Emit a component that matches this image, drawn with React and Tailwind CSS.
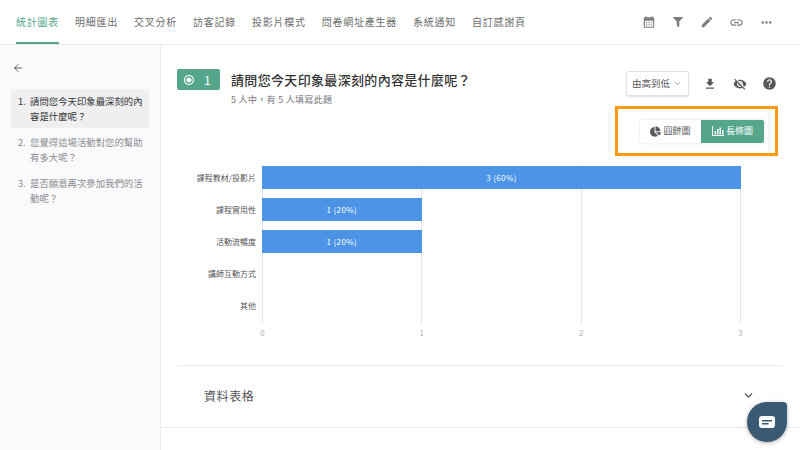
import { ArrowLeft, ChevronDown } from "lucide-react";
import { FaChartPie, FaFilter } from "react-icons/fa";
import {
  MdCalendarMonth,
  MdEdit,
  MdFileDownload,
  MdHelp,
  MdLink,
  MdMoreHoriz,
  MdRadioButtonChecked,
  MdVisibilityOff,
} from "react-icons/md";

const tabs = ["統計圖表", "明細匯出", "交叉分析", "訪客記錄", "投影片模式", "問卷網址產生器", "系統通知", "自訂感謝頁"];

const questions = [
  { no: "1.", text: "請問您今天印象最深刻的內容是什麼呢？", active: true },
  { no: "2.", text: "您覺得這場活動對您的幫助有多大呢？" },
  { no: "3.", text: "是否願意再次參加我們的活動呢？" },
];

const rows = [
  { label: "課程教材/投影片", value: "3 (60%)", width: "w-full" },
  { label: "課程實用性", value: "1 (20%)", width: "w-1/3" },
  { label: "活動流暢度", value: "1 (20%)", width: "w-1/3" },
  { label: "講師互動方式" },
  { label: "其他" },
];

function BarIcon() {
  return (
    <svg width="12" height="10" viewBox="0 0 12 10" fill="currentColor">
      <path d="M0 0h1v9h11v1H0z" />
      <path d="M2.500 5h1.500v3.500H2.500zM5 3h1.500v5.500H5zM7.500 1.500H9v7H7.500zM10 4h1.500v4.500H10z" />
    </svg>
  );
}

function ChatIcon() {
  return (
    <svg width="16" height="12" viewBox="0 0 16 12">
      <rect width="16" height="12" rx="3" fill="#fff" />
      <path d="M3 4h10v1.500H3zM3 7h6.500v1.500H3z" fill="#3a5a73" />
    </svg>
  );
}

export default function App() {
  return (
    <div className="relative flex h-[450px] w-[800px] flex-col overflow-hidden bg-white font-['Noto_Sans_CJK_TC',sans-serif] text-[#4a4a4a]">
      <header className="flex h-[45px] shrink-0 items-stretch border-b border-[#e8e8ee] pl-4 pr-[26px]">
        <nav className="flex gap-4">
          {tabs.map((tab, i) => (
            <a
              key={tab}
              className={
                i === 0
                  ? "flex items-center border-b-2 border-[#56a68c] pt-[1px] text-[10px] tracking-[0.75px] text-[#56a68c]"
                  : "flex items-center pb-[2px] pt-[1px] text-[10px] tracking-[0.75px] text-[#6b6b6b]"
              }
            >
              {tab}
            </a>
          ))}
        </nav>
        <div className="ml-auto flex items-center gap-[15px] text-[#7d7d83]">
          <MdCalendarMonth size={14} />
          <FaFilter size={10} className="mx-[2px]" />
          <MdEdit size={14} />
          <MdLink size={15} />
          <MdMoreHoriz size={15} />
        </div>
      </header>

      <div className="flex flex-1">
        <aside className="w-[161px] shrink-0 border-r border-[#ececf1] bg-[#fafafc] pt-[17px]">
          <ArrowLeft size={12} strokeWidth={1.75} className="ml-[12px] text-[#4a4a4a]" />
          <ul className="mt-[15px] flex flex-col gap-[2px] px-[11px]">
            {questions.map((q) => (
              <li
                key={q.no}
                className={
                  q.active
                    ? "flex rounded-[2px] bg-[#efeff1] py-[5px] pl-[7px] pr-[6px] text-[9.400px] leading-[14.500px] text-[#333]"
                    : "flex py-[5px] pl-[7px] pr-[6px] text-[9.400px] leading-[14.500px] text-[#8a8a8f]"
                }
              >
                <span className="w-[12px] shrink-0">{q.no}</span>
                <span>{q.text}</span>
              </li>
            ))}
          </ul>
        </aside>

        <main className="flex-1 pt-[24px]">
          <div className="border-b border-[#e8e8f0] pl-[16px] pr-[17px]">
            <section className="flex items-start">
              <div className="flex h-[21px] w-[43px] items-center rounded-[2px] bg-[#56a68c] pl-[6px] text-white">
                <MdRadioButtonChecked size={12} />
                <span className="ml-[9px] text-[12px]">1</span>
              </div>
              <div className="ml-[11px]">
                <h1 className="text-[13px] font-medium leading-[21px] tracking-[0.33px] text-[#333]">
                  請問您今天印象最深刻的內容是什麼呢？
                </h1>
                <p className="mt-[2px] text-[9px] leading-[16px] tracking-[0.3px] text-[#77777c]">5 人中，有 5 人填寫此題</p>
              </div>
              <div className="ml-auto flex items-center text-[#58585c]">
                <button className="mt-[2px] flex h-[25px] w-[63px] items-center justify-between rounded-[2px] border border-[#e2e2e6] pl-[5px] pr-[6px] text-[9.500px] shadow-[0_1px_2px_rgba(0,0,0,0.12)]">
                  由高到低
                  <ChevronDown size={9} strokeWidth={1.5} />
                </button>
                <div className="ml-[14px] mr-[6px] mt-[2px] flex items-center gap-[15.500px]">
                  <MdFileDownload size={14} />
                  <MdVisibilityOff size={14} />
                  <MdHelp size={15} />
                </div>
              </div>
            </section>

            <div className="flex justify-end pr-[5px]">
              <div className="-mt-[2px] flex h-[50px] w-[163px] items-center justify-end border-[3px] border-[#ff9a14] pr-[11px]">
                <div className="flex h-[23px] w-[124px] rounded-[2px] text-[9px] shadow-[0_0_3px_rgba(0,0,0,0.14)]">
                  <span className="flex w-[61px] items-center justify-center gap-[2px] text-[#5a5a5e]">
                    <FaChartPie size={11} />
                    圓餅圖
                  </span>
                  <span className="flex w-[63px] items-center justify-center gap-[2px] rounded-r-[2px] bg-[#56a68c] text-white">
                    <BarIcon />
                    長條圖
                  </span>
                </div>
              </div>
            </div>

            <section className="mt-[9px] flex">
              <ul className="w-[85px] shrink-0 pr-[6px] pt-[1px] text-right text-[8px] text-[#55555a]">
                {rows.map((row) => (
                  <li key={row.label} className="flex h-[32px] items-center justify-end whitespace-nowrap pb-[9px]">
                    {row.label}
                  </li>
                ))}
              </ul>
              <div className="w-[479px] shrink-0">
                <div className="relative h-[158px] pt-[1px]">
                  <div className="absolute inset-0 flex justify-between">
                    <i className="w-px bg-[#dfe6f3]" />
                    <i className="w-px bg-[#e6e6ea]" />
                    <i className="w-px bg-[#e6e6ea]" />
                    <i className="w-px bg-[#e6e6ea]" />
                  </div>
                  {rows.map((row) => (
                    <div key={row.label} className="relative h-[32px]">
                      {row.value && (
                        <div
                          className={`${row.width} flex h-[23px] items-center justify-center bg-[#4c94e6] text-[8px] tracking-[0.4px] text-white`}
                        >
                          {row.value}
                        </div>
                      )}
                    </div>
                  ))}
                </div>
                <div className="mt-[5px] flex justify-between text-[8px] leading-[10px] text-[#b0b0b4]">
                  {[0, 1, 2, 3].map((tick) => (
                    <span key={tick} className="flex w-px justify-center">
                      {tick}
                    </span>
                  ))}
                </div>
              </div>
            </section>

            <section className="mt-[27px] flex h-[62px] items-center justify-between border-t border-[#ececf0] pb-[2px] pl-[27px] pr-[28px]">
              <h2 className="text-[12px] tracking-[0.6px] text-[#55555a]">資料表格</h2>
              <ChevronDown size={13} strokeWidth={2} className="text-[#44444a]" />
            </section>
          </div>
        </main>
      </div>

      <button className="absolute left-[747px] top-[402px] flex h-[40px] w-[40px] items-center justify-center rounded-[20px] rounded-tr-[4px] bg-[#3a5a73] shadow-[0_1px_4px_rgba(0,0,0,0.3)]">
        <ChatIcon />
      </button>
    </div>
  );
}
